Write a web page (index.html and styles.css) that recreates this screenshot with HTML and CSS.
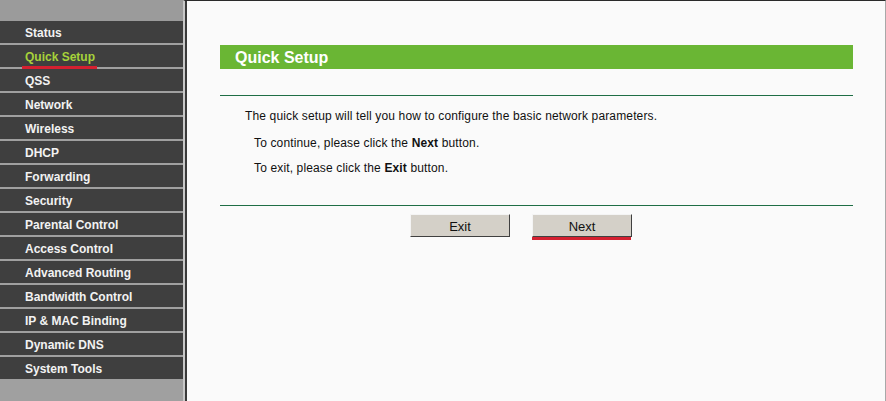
FILE: index.html
```html
<!DOCTYPE html>
<html>
<head>
<meta charset="utf-8">
<link rel="stylesheet" href="styles.css">
</head>
<body>
<div class="page">
  <nav class="sidebar">
    <div class="side-top"></div>
    <ul class="menu">
      <li>Status</li>
      <li class="active">Quick Setup<span class="mark mark-menu"></span></li>
      <li>QSS</li>
      <li>Network</li>
      <li>Wireless</li>
      <li>DHCP</li>
      <li>Forwarding</li>
      <li>Security</li>
      <li>Parental Control</li>
      <li>Access Control</li>
      <li>Advanced Routing</li>
      <li>Bandwidth Control</li>
      <li>IP &amp; MAC Binding</li>
      <li>Dynamic DNS</li>
      <li class="last">System Tools</li>
    </ul>
  </nav>
  <main class="main">
    <div class="panel">
      <div class="title">Quick Setup</div>
      <div class="rule rule-top"></div>
      <p class="lead">The quick setup will tell you how to configure the basic network parameters.</p>
      <p class="note">To continue, please click the <b>Next</b> button.</p>
      <p class="note note-last">To exit, please click the <b>Exit</b> button.</p>
      <div class="rule rule-bottom"></div>
      <div class="buttons">
        <button class="btn">Exit</button>
        <button class="btn btn-next">Next<span class="mark mark-btn"></span></button>
      </div>
    </div>
  </main>
</div>
</body>
</html>
```

FILE: styles.css
```css
html, body {
  margin: 0;
  padding: 0;
  width: 886px;
  height: 401px;
  overflow: hidden;
  background: #fafafa;
}

.page {
  display: flex;
  height: 401px;
  font-family: "Liberation Sans", Arial, sans-serif;
}

.sidebar {
  width: 183px;
  flex: none;
  background: #a0a0a0;
  display: flex;
  flex-direction: column;
}

.side-top {
  height: 21px;
  background: #9b9b9b;
}

.menu {
  list-style: none;
  margin: 0;
  padding: 0;
}

.menu li {
  position: relative;
  height: 22px;
  line-height: 24px;
  margin-bottom: 2px;
  padding-left: 25px;
  background: #3f3f3f;
  color: #f2f2f2;
  font-size: 12px;
  font-weight: bold;
  white-space: nowrap;
}

.menu li.last {
  margin-bottom: 0;
}

.menu li.active {
  color: #a6d23a;
}

.mark {
  position: absolute;
  background: #d42030;
  height: 3px;
}

.mark-menu {
  left: 22px;
  width: 75px;
  top: 21px;
}

.main {
  flex: 1;
  border-left: 2px solid #c8c8c8;
  box-shadow: inset 2px 0 0 #3a3a3a;
  padding-left: 2px;
  border-right: 1px solid #a8a8a8;
  border-top: 1px solid #2a2a2a;
  background: #fafafa;
}

.panel {
  margin: 44px 0 0 33px;
  width: 633px;
}

.title {
  height: 24px;
  line-height: 25px;
  background: #6ab634;
  color: #ffffff;
  font-size: 16px;
  font-weight: bold;
  padding-left: 15px;
}

.rule {
  height: 1px;
  background: #1f6e45;
}

.rule-top {
  margin-top: 26px;
}

.lead, .note {
  margin: 0;
  font-size: 12px;
  color: #111;
  line-height: 14px;
  letter-spacing: 0.14px;
}

.lead {
  margin-top: 13px;
  padding-left: 25px;
}

.note {
  margin-top: 13px;
  padding-left: 34px;
}

.note-last {
  margin-top: 11px;
}

.rule-bottom {
  margin-top: 30px;
}

.buttons {
  display: flex;
  gap: 22px;
  padding-left: 190px;
  margin-top: 8px;
}

.btn {
  position: relative;
  width: 100px;
  height: 23px;
  padding: 2px 0 0;
  margin: 0;
  background: #d4d0c8;
  border: 1px solid;
  border-color: #f4f4f4 #404040 #404040 #f4f4f4;
  font-family: "Liberation Sans", Arial, sans-serif;
  font-size: 13px;
  color: #111;
  line-height: 19px;
}

.mark-btn {
  left: -1px;
  right: 0;
  bottom: -4px;
}
```
